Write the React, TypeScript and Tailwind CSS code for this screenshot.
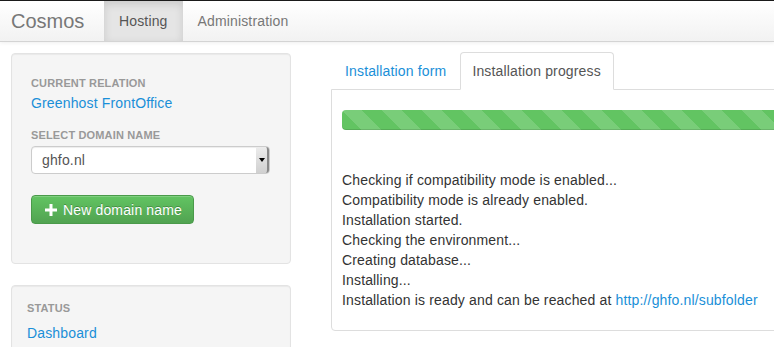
import React from 'react';

const font = { fontFamily: '"Liberation Sans", Arial, sans-serif' };

function PlusIcon() {
  return (
    <svg viewBox="0 0 12 12" className="w-[12px] h-[12px]" fill="white">
      <path d="M4.5 0h3v4.5H12v3H7.5V12h-3V7.5H0v-3h4.5z" />
    </svg>
  );
}

const lines = [
  'Checking if compatibility mode is enabled...',
  'Compatibility mode is already enabled.',
  'Installation started.',
  'Checking the environment...',
  'Creating database...',
  'Installing...',
];

export default function App() {
  return (
    <div className="w-[774px] h-[347px] overflow-hidden bg-white text-[14px] leading-[20px] tracking-[0.15px] text-[#333]" style={font}>
      {/* Navbar */}
      <div className="h-[42px] border-t border-t-[#1a1a1a] border-b border-b-[#d4d4d4] bg-[linear-gradient(#ffffff,#f2f2f2)] shadow-[0_1px_4px_rgba(0,0,0,0.065)] flex">
        <div className="pl-[11px] w-[104px] text-[20px] leading-[40px] tracking-normal text-[#777]">Cosmos</div>
        <div className="px-[15px] leading-[40px] text-[#555] bg-[#e5e5e5] shadow-[inset_0_3px_8px_rgba(0,0,0,0.125)]">Hosting</div>
        <div className="px-[15px] leading-[40px] text-[#777]">Administration</div>
      </div>

      <div className="flex pt-[11px]">
        {/* Sidebar */}
        <div className="ml-[11px] w-[280px] shrink-0 flex flex-col gap-[21px]">
          <div className="border border-[#e3e3e3] rounded-[4px] bg-[#f5f5f5] shadow-[inset_0_1px_1px_rgba(0,0,0,0.05)] px-[19px] pt-[19px] pb-[39px]">
            <div className="text-[11px] font-bold uppercase text-[#999]">Current relation</div>
            <div className="text-[#1a8fd8]">Greenhost FrontOffice</div>
            <div className="mt-[12px] text-[11px] font-bold uppercase text-[#999]">Select domain name</div>
            <div className="mt-[1px] w-[239px] h-[28px] bg-white border border-[#ccc] rounded-[4px] shadow-[inset_0_1px_1px_rgba(0,0,0,0.075)] flex items-center">
              <div className="flex-1 pl-[10px] text-[#555]">ghfo.nl</div>
              <div className="w-[13px] h-[26px] bg-[linear-gradient(#ececec,#d0d0d0)] border-r-2 border-r-[#8a8a8a] rounded-r-[3px] flex items-center justify-center">
                <div className="w-0 h-0 border-l-[3px] border-r-[3px] border-t-[4px] border-l-transparent border-r-transparent border-t-black" />
              </div>
            </div>
            <div className="mt-[21px] w-[163px] h-[29px] rounded-[4px] border border-[#4a9a4a] bg-[linear-gradient(#62c462,#51a351)] shadow-[inset_0_1px_0_rgba(255,255,255,0.2)] flex items-center gap-[6px] pl-[13px] text-white [text-shadow:0_-1px_0_rgba(0,0,0,0.25)]">
              <PlusIcon />
              <span>New domain name</span>
            </div>
          </div>

          <div className="border border-[#e3e3e3] rounded-[4px] bg-[#f5f5f5] shadow-[inset_0_1px_1px_rgba(0,0,0,0.05)] px-[15px] pt-[12px] pb-[20px]">
            <div className="text-[11px] font-bold uppercase text-[#999]">Status</div>
            <div className="mt-[5px] text-[#1a8fd8]">Dashboard</div>
          </div>
        </div>

        {/* Main content */}
        <div className="ml-[40px] w-[480px] shrink-0">
          <div className="flex -mt-[1px]">
            <div className="ml-[1px] mr-[1px] px-[12px] py-[8px] border border-transparent -mb-[1px] text-[#1a8fd8]">Installation form</div>
            <div className="pl-[11px] pr-[12px] py-[8px] border border-[#ddd] border-b-white rounded-t-[4px] bg-white text-[#555] -mb-[1px] relative">Installation progress</div>
          </div>
          <div className="border border-[#ddd] rounded-bl-[4px] px-[10px] py-[20px]">
            <div className="h-[20px] rounded-[4px] bg-[#62c462] bg-[linear-gradient(45deg,rgba(255,255,255,.15)_25%,transparent_25%,transparent_50%,rgba(255,255,255,.15)_50%,rgba(255,255,255,.15)_75%,transparent_75%,transparent)] bg-[length:40px_40px] shadow-[inset_0_-1px_0_rgba(0,0,0,0.12)]" />
            <div className="mt-[40px]">
              {lines.map((l) => (
                <div key={l}>{l}</div>
              ))}
              <div>
                Installation is ready and can be reached at{' '}
                <span className="text-[#1a8fd8]">http://ghfo.nl/subfolder</span>
              </div>
            </div>
          </div>
        </div>
      </div>
    </div>
  );
}
